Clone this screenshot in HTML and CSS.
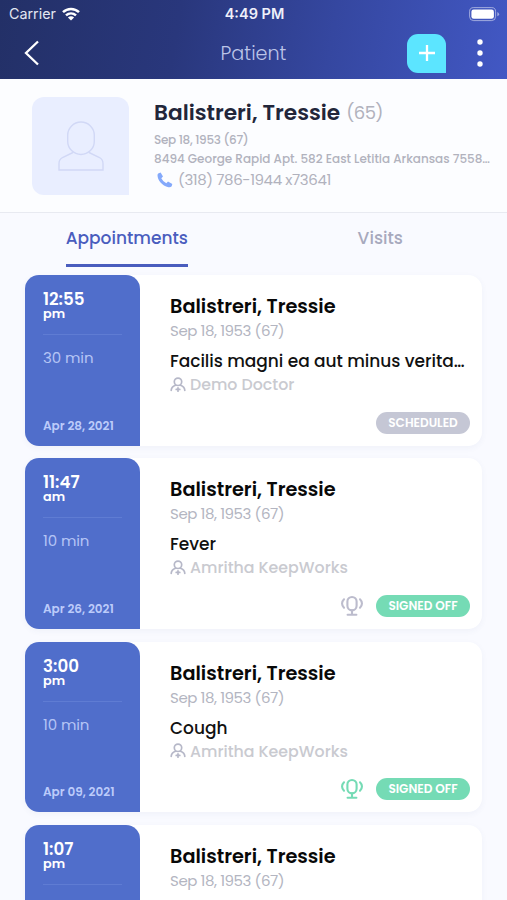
FILE: index.html
```html
<!DOCTYPE html>
<html lang="en">
<head>
<meta charset="utf-8">
<title>Patient</title>
<link rel="stylesheet" href="styles.css">
</head>
<body>
<svg class="defs" aria-hidden="true">
  <symbol id="doctor" viewBox="0 0 16 16"><g fill="none" stroke="currentColor" stroke-width="1.700" stroke-linecap="round"><circle cx="8" cy="4.800" r="3.700"/><path d="M1.200 13.400C1.300 10.700 3.100 9.200 5.500 8.300M14.800 13.400C14.700 10.700 12.900 9.200 10.500 8.300M8 10.800v3.400M6.200 12.400h3.600"/></g></symbol>
  <symbol id="mic" viewBox="0 0 24 22"><g fill="none" stroke="currentColor" stroke-width="2.100" stroke-linecap="round"><rect x="7.400" y="2" width="9.200" height="13.400" rx="4.600"/><path d="M12 15.400v4.200M7.600 19.800h8.800M4 4.300C1.400 6.800 1.400 10.200 4 12.700M20 4.300C22.600 6.800 22.600 10.200 20 12.700"/></g></symbol>
</svg>
<header class="topbar">
  <div class="status">
    <div class="carrier"><span>Carrier</span>
      <svg width="18" height="14" viewBox="0 0 18 14"><g fill="none" stroke="#fff" stroke-width="2.500"><path d="M1 5.200C5.500.900 12.500.900 17 5.200M4 8.400c2.900-2.700 7.100-2.700 10 0"/></g><path d="M5.900 10.400c1.800-1.600 4.400-1.600 6.200 0L9 13.600z" fill="#fff"/></svg>
    </div>
    <div class="clock">4:49 PM</div>
    <svg class="battery" width="31" height="15" viewBox="0 0 31 15"><rect x=".6" y=".6" width="26" height="13" rx="4" fill="none" stroke="#fff" stroke-opacity=".5"/><rect x="2.400" y="2.400" width="22.500" height="9.400" rx="2.300" fill="#fff"/><path d="M28.300 5v4.300q1.800-.7 1.800-2.150T28.300 5z" fill="#fff" fill-opacity=".5"/></svg>
  </div>
  <nav class="navrow">
    <svg class="back" width="16" height="26" viewBox="0 0 16 26"><path d="M14 1.500 2 13l12 11.500" fill="none" stroke="#fff" stroke-width="2.300"/></svg>
    <h1>Patient</h1>
    <div class="actions">
      <div class="add"><svg width="16" height="16" viewBox="0 0 16 16"><path d="M8 0v16M0 8h16" stroke="#fff" stroke-width="2.300"/></svg></div>
      <svg width="6" height="28" viewBox="0 0 6 28" fill="#fff"><circle cx="3" cy="3" r="2.700"/><circle cx="3" cy="14" r="2.700"/><circle cx="3" cy="25" r="2.700"/></svg>
    </div>
  </nav>
</header>
<section class="patient">
  <div class="avatar"><svg width="46" height="50" viewBox="0 0 46 50"><g fill="none" stroke="#d1d8f6" stroke-width="1.400"><rect x="9.700" y="1" width="26.600" height="32.500" rx="13.300"/><path d="M15 31.500 4.500 36.500Q1 38.500 1 42.500V49h44v-6.500Q45 38.500 41.500 36.500L31 31.500"/></g></svg></div>
  <div class="info">
    <div class="fullname"><b>Balistreri, Tressie</b><span class="age">(65)</span></div>
    <div class="dob">Sep 18, 1953 (67)</div>
    <div class="address">8494 George Rapid Apt. 582 East Letitia Arkansas 7558…</div>
    <div class="phone"><svg width="16" height="16" viewBox="0 0 16 16"><path d="M1.200 1.500 3.600.600 6 4.600 4.300 6.200Q5.800 9.400 9.300 11.200L11 9.600 15.300 11.900 14.700 14.300Q13.500 15.600 11.500 15.200C5 14 .500 8 .500 3.300Q.500 2.200 1.200 1.500z" fill="#84a9fb"/></svg><span>(318) 786-1944 x73641</span></div>
  </div>
</section>
<div class="tabs">
  <div class="tab"><span class="active">Appointments</span></div>
  <div class="tab"><span>Visits</span></div>
</div>
<main class="list">
  <article class="card">
    <div class="when"><div class="time">12:55</div><div class="half">pm</div><div class="length">30 min</div><div class="date">Apr 28, 2021</div></div>
    <div class="what"><div class="name">Balistreri, Tressie</div><div class="birth">Sep 18, 1953 (67)</div><div class="reason">Facilis magni ea aut minus verita…</div>
      <div class="doctor"><svg><use href="#doctor"/></svg><span>Demo Doctor</span></div>
      <div class="foot"><span class="pill gray">SCHEDULED</span></div></div>
  </article>
  <article class="card">
    <div class="when"><div class="time">11:47</div><div class="half">am</div><div class="length">10 min</div><div class="date">Apr 26, 2021</div></div>
    <div class="what"><div class="name">Balistreri, Tressie</div><div class="birth">Sep 18, 1953 (67)</div><div class="reason">Fever</div>
      <div class="doctor"><svg><use href="#doctor"/></svg><span>Amritha KeepWorks</span></div>
      <div class="foot"><svg class="mic"><use href="#mic"/></svg><span class="pill">SIGNED OFF</span></div></div>
  </article>
  <article class="card">
    <div class="when"><div class="time">3:00</div><div class="half">pm</div><div class="length">10 min</div><div class="date">Apr 09, 2021</div></div>
    <div class="what"><div class="name">Balistreri, Tressie</div><div class="birth">Sep 18, 1953 (67)</div><div class="reason">Cough</div>
      <div class="doctor"><svg><use href="#doctor"/></svg><span>Amritha KeepWorks</span></div>
      <div class="foot"><svg class="mic on"><use href="#mic"/></svg><span class="pill">SIGNED OFF</span></div></div>
  </article>
  <article class="card">
    <div class="when"><div class="time">1:07</div><div class="half">pm</div><div class="length"></div></div>
    <div class="what"><div class="name">Balistreri, Tressie</div><div class="birth">Sep 18, 1953 (67)</div></div>
  </article>
</main>
</body>
</html>
```
FILE: styles.css
```css
* { box-sizing: border-box; }
body { margin: 0; height: 900px; overflow: hidden; background: #f9faff; font-family: Poppins, Inter, sans-serif; white-space: nowrap; }
svg { display: block; flex: none; }
.defs { width: 0; height: 0; position: absolute; }

.topbar { height: 79px; background: linear-gradient(100deg, #233067 0%, #29377c 35%, #3547a0 65%, #4258c4 100%); color: #fff; }
.status { height: 27px; padding: 0 7px 0 9px; display: grid; grid-template-columns: 1fr auto 1fr; align-items: center; font-family: Inter, sans-serif; font-size: 14.500px; line-height: 28px; }
.carrier { display: flex; align-items: center; gap: 6px; color: #e3e6f2; }
.carrier span { font-size: 14.300px; }
.clock { font-weight: 600; color: #eef0fa; }
.battery { justify-self: end; }
.navrow { height: 52px; padding: 0 24px; display: grid; grid-template-columns: 1fr auto 1fr; align-items: center; }
h1 { margin: 0; font-size: 19.200px; font-weight: 300; color: #bcc5e8; }
.actions { display: flex; align-items: center; justify-content: flex-end; gap: 31px; }
.add { width: 39px; height: 39px; border-radius: 11px 11px 0 11px; background: #5ce5ff; display: grid; place-items: center; }

.patient { height: 134px; padding: 18px 0 0 32px; display: flex; gap: 25px; background: #fcfdff; border-bottom: 1px solid #e8eaf1; }
.avatar { width: 97px; height: 98px; border-radius: 12px 12px 0 12px; background: #e9eeff; display: grid; place-items: center; flex: none; }
.info { color: #b1b2bd; font-weight: 500; }
.fullname { height: 32px; line-height: 32px; display: flex; gap: 6px; font-size: 21.700px; }
.fullname b { font-weight: 600; color: #22263a; }
.age { font-size: 18px; font-weight: 400; letter-spacing: -.6px; }
.dob, .address { height: 19px; line-height: 21px; font-size: 12px; letter-spacing: -.015px; }
.dob { letter-spacing: -.3px; }
.phone { height: 26px; display: flex; align-items: center; gap: 5px; padding-left: 3px; font-size: 15px; font-weight: 400; letter-spacing: -.4px; line-height: 26px; }

.tabs { height: 62px; display: grid; grid-template-columns: 1fr 1fr; }
.tab { text-align: center; font-size: 17px; font-weight: 500; color: #a7a9bd; }
.tab span { display: inline-block; height: 54px; line-height: 50px; }
.tab .active { color: #4a5dbe; border-bottom: 3px solid #4a5dbe; }

.list { padding: 0 25px; display: grid; gap: 12.700px; }
.card { height: 170.600px; display: flex; background: #fff; border-radius: 14px; box-shadow: 0 2px 6px rgba(60, 70, 130, .05); }
.when { width: 115px; padding: 14px 18px 12px; display: flex; flex-direction: column; background: #506ecb; border-radius: 14px 14px 0 14px; color: #fff; font-weight: 600; }
.time { font-size: 16.700px; line-height: 20px; }
.half { font-size: 12.800px; line-height: 10px; }
.length { margin-top: 15px; padding-top: 13px; border-top: 1px solid #5f7cd3; font-size: 15px; line-height: 20px; font-weight: 400; letter-spacing: -.1px; color: #b5c4f5; }
.date { margin-top: auto; font-size: 12px; line-height: 16px; color: #bccbfa; }
.what { flex: 1; padding: 19px 12px 12px 30px; display: flex; flex-direction: column; }
.name { font-size: 19.300px; line-height: 26px; font-weight: 600; color: #080808; }
.birth { font-size: 15px; line-height: 22px; letter-spacing: -.42px; color: #b3b5c1; }
.reason { margin-top: 6px; font-size: 17px; line-height: 26px; font-weight: 500; letter-spacing: -.03px; color: #111; }
.doctor { height: 21px; display: flex; align-items: center; gap: 4px; font-size: 15.800px; font-weight: 500; color: #c9cad0; }
.doctor svg { width: 16px; height: 16px; color: #b6b8c8; }
.foot { margin-top: auto; display: flex; align-items: center; justify-content: flex-end; gap: 12px; }
.mic { width: 24px; height: 22px; color: #bcbccd; }
.mic.on { color: #75dbb5; }
.pill { width: 94px; height: 22px; line-height: 22px; border-radius: 11px; background: #75dbb5; color: #fff; font-size: 12.100px; font-weight: 600; text-align: center; }
.pill.gray { background: #c5c7d5; }
```
